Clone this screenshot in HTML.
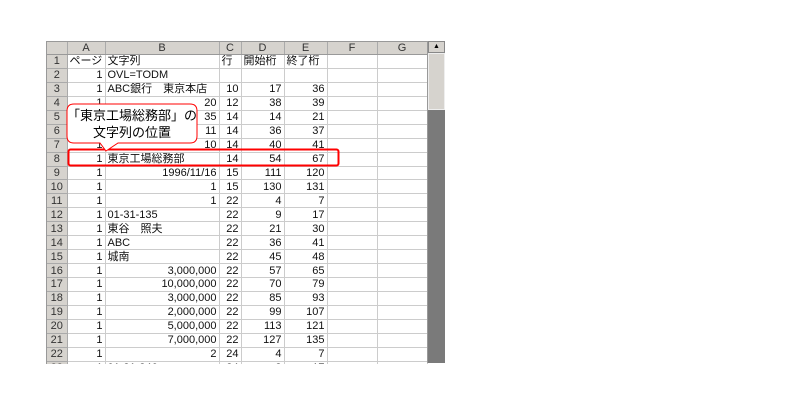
<!DOCTYPE html>
<html><head><meta charset="utf-8"><style>
body{margin:0;width:793px;height:415px;background:#fff;position:relative;overflow:hidden;font-family:"Liberation Sans","Noto Sans CJK JP",sans-serif;}
#wrap{position:absolute;left:46px;top:41px;width:398px;height:322px;overflow:hidden;border-left:1px solid #999;border-top:1px solid #999;}
table{border-collapse:collapse;table-layout:fixed;font-size:11px;color:#111;}
td{height:12.95px;padding:0 2px;border-right:1px solid #ccc;border-bottom:1px solid #ccc;white-space:nowrap;overflow:hidden;line-height:12px;}
td.h{background:#d6d3ce;text-align:center;color:#333;border-right:1px solid #aaa;border-bottom:1px solid #aaa;}
tr.hd td{background:#d6d3ce;text-align:center;color:#333;height:10.5px;border-right:1px solid #aaa;border-bottom:1px solid #999;}
.r{text-align:right;}
#sb{position:absolute;left:427px;top:41px;width:17px;height:322px;background:#7a7a7a;border-left:1px solid #999;}
#sb .t{position:absolute;left:0;top:12px;width:15px;height:55px;background:#d6d3ce;border:1px solid #eee;}
#sb .b{position:absolute;left:0;top:0;width:15px;height:10px;background:#d6d3ce;border:1px solid #888;font-size:7px;text-align:center;line-height:10px;}
</style></head><body>
<div id="wrap"><table>
<colgroup><col style="width:20px"><col style="width:38px"><col style="width:114px"><col style="width:22px"><col style="width:43px"><col style="width:43px"><col style="width:50px"><col style="width:50px"></colgroup>
<tr class="hd"><td></td><td>A</td><td>B</td><td>C</td><td>D</td><td>E</td><td>F</td><td>G</td></tr>
<tr><td class="h">1</td><td>ページ</td><td>文字列</td><td>行</td><td>開始桁</td><td>終了桁</td><td></td><td></td></tr>
<tr><td class="h">2</td><td class="r">1</td><td>OVL=TODM</td><td></td><td></td><td></td><td></td><td></td></tr>
<tr><td class="h">3</td><td class="r">1</td><td>ABC銀行　東京本店</td><td class="r">10</td><td class="r">17</td><td class="r">36</td><td></td><td></td></tr>
<tr><td class="h">4</td><td class="r">1</td><td class="r">20</td><td class="r">12</td><td class="r">38</td><td class="r">39</td><td></td><td></td></tr>
<tr><td class="h">5</td><td class="r">1</td><td class="r">35</td><td class="r">14</td><td class="r">14</td><td class="r">21</td><td></td><td></td></tr>
<tr><td class="h">6</td><td class="r">1</td><td class="r">11</td><td class="r">14</td><td class="r">36</td><td class="r">37</td><td></td><td></td></tr>
<tr><td class="h">7</td><td class="r">1</td><td class="r">10</td><td class="r">14</td><td class="r">40</td><td class="r">41</td><td></td><td></td></tr>
<tr><td class="h">8</td><td class="r">1</td><td>東京工場総務部</td><td class="r">14</td><td class="r">54</td><td class="r">67</td><td></td><td></td></tr>
<tr><td class="h">9</td><td class="r">1</td><td class="r">1996/11/16</td><td class="r">15</td><td class="r">111</td><td class="r">120</td><td></td><td></td></tr>
<tr><td class="h">10</td><td class="r">1</td><td class="r">1</td><td class="r">15</td><td class="r">130</td><td class="r">131</td><td></td><td></td></tr>
<tr><td class="h">11</td><td class="r">1</td><td class="r">1</td><td class="r">22</td><td class="r">4</td><td class="r">7</td><td></td><td></td></tr>
<tr><td class="h">12</td><td class="r">1</td><td>01-31-135</td><td class="r">22</td><td class="r">9</td><td class="r">17</td><td></td><td></td></tr>
<tr><td class="h">13</td><td class="r">1</td><td>東谷　照夫</td><td class="r">22</td><td class="r">21</td><td class="r">30</td><td></td><td></td></tr>
<tr><td class="h">14</td><td class="r">1</td><td>ABC</td><td class="r">22</td><td class="r">36</td><td class="r">41</td><td></td><td></td></tr>
<tr><td class="h">15</td><td class="r">1</td><td>城南</td><td class="r">22</td><td class="r">45</td><td class="r">48</td><td></td><td></td></tr>
<tr><td class="h">16</td><td class="r">1</td><td class="r">3,000,000</td><td class="r">22</td><td class="r">57</td><td class="r">65</td><td></td><td></td></tr>
<tr><td class="h">17</td><td class="r">1</td><td class="r">10,000,000</td><td class="r">22</td><td class="r">70</td><td class="r">79</td><td></td><td></td></tr>
<tr><td class="h">18</td><td class="r">1</td><td class="r">3,000,000</td><td class="r">22</td><td class="r">85</td><td class="r">93</td><td></td><td></td></tr>
<tr><td class="h">19</td><td class="r">1</td><td class="r">2,000,000</td><td class="r">22</td><td class="r">99</td><td class="r">107</td><td></td><td></td></tr>
<tr><td class="h">20</td><td class="r">1</td><td class="r">5,000,000</td><td class="r">22</td><td class="r">113</td><td class="r">121</td><td></td><td></td></tr>
<tr><td class="h">21</td><td class="r">1</td><td class="r">7,000,000</td><td class="r">22</td><td class="r">127</td><td class="r">135</td><td></td><td></td></tr>
<tr><td class="h">22</td><td class="r">1</td><td class="r">2</td><td class="r">24</td><td class="r">4</td><td class="r">7</td><td></td><td></td></tr>
<tr><td class="h">23</td><td class="r">1</td><td>01-31-246</td><td class="r">24</td><td class="r">8</td><td class="r">17</td><td></td><td></td></tr>
</table></div>
<div id="sb"><div class="b">▲</div><div class="t"></div></div>
<svg style="position:absolute;left:0;top:0" width="793" height="415">
<rect x="68.5" y="149.5" width="270" height="16" rx="2" fill="none" stroke="#f00" stroke-width="2"/>
<path d="M74 104 H190 Q197 104 197 111 V136 Q197 143 190 143 H118 L106 151 L100 143 H74 Q67 143 67 136 V111 Q67 104 74 104 Z" fill="#fff" stroke="#f00" stroke-width="1"/>
<text x="132" y="120" font-size="13" text-anchor="middle" fill="#000" font-family="Liberation Sans, Noto Sans CJK JP, sans-serif">「東京工場総務部」の</text>
<text x="132" y="137" font-size="13" text-anchor="middle" fill="#000" font-family="Liberation Sans, Noto Sans CJK JP, sans-serif">文字列の位置</text>
</svg>
</body></html>
